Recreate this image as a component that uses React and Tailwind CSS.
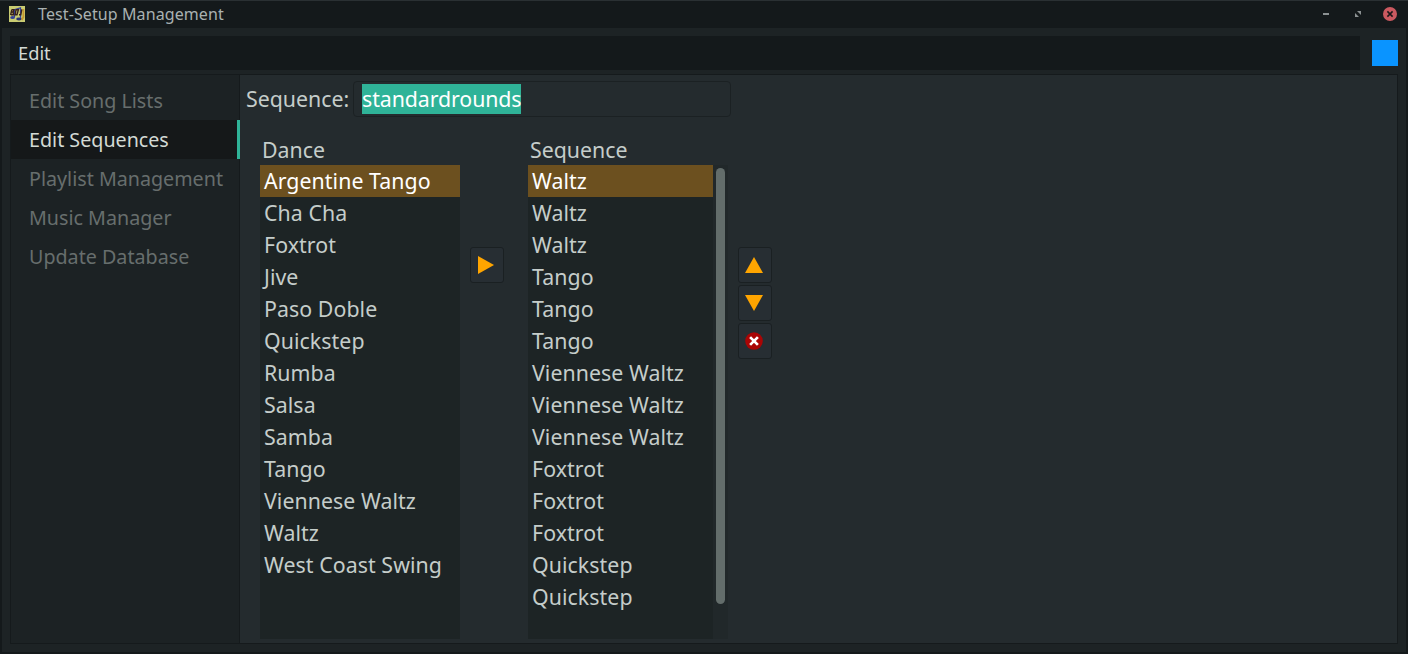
const tabs = ["Edit Song Lists", "Edit Sequences", "Playlist Management", "Music Manager", "Update Database"];

const dances = [
  "Argentine Tango", "Cha Cha", "Foxtrot", "Jive", "Paso Doble", "Quickstep", "Rumba",
  "Salsa", "Samba", "Tango", "Viennese Waltz", "Waltz", "West Coast Swing",
];

const sequence = [
  "Waltz", "Waltz", "Waltz", "Tango", "Tango", "Tango", "Viennese Waltz", "Viennese Waltz",
  "Viennese Waltz", "Foxtrot", "Foxtrot", "Foxtrot", "Quickstep", "Quickstep",
];

function AppIcon() {
  return (
    <svg width="16" height="16" viewBox="0 0 16 16">
      <rect width="16" height="16" fill="#c9cc72" />
      <path d="M5.5 11V3.6l6-1.8v10" fill="none" stroke="#35409a" strokeWidth="1.2" />
      <ellipse cx="3.6" cy="11.6" rx="2.4" ry="1.5" fill="#35409a" />
      <ellipse cx="10" cy="13" rx="2.8" ry="1.4" fill="#2b3478" />
      <path d="M14.4 3v8l-1.6 3" fill="none" stroke="#c8962c" strokeWidth="1.8" />
      <path d="M2.8 3.6 1.6 9M2.8 3.6h2L4.2 6H2.4M4.2 6l.2 2.8H1.8M7 3.6 6.2 8.8h1.8L9.4 3.8H7M12.8 3.4 11.8 8.8H10" fill="none" stroke="#39201c" strokeWidth="1.4" />
    </svg>
  );
}

function TitleBar() {
  return (
    <header className="flex h-7 shrink-0 items-center border-t border-[#2a3033] bg-[#14191b] pb-px pl-[9px] pr-[11px]">
      <AppIcon />
      <span className="ml-[13px] text-[16px] leading-6 tracking-[0.1px] text-[#a9b1b1]">Test-Setup Management</span>
      <div className="ml-auto flex items-center">
        <svg width="6" height="14" viewBox="0 0 6 14" shapeRendering="crispEdges">
          <rect y="6" width="6" height="2" fill="#8b9192" />
        </svg>
        <svg className="ml-[26px]" width="6" height="6" viewBox="0 0 6 6">
          <path d="M2 0h4v4zM0 2v4h4z" fill="#8b9192" />
        </svg>
        <svg className="ml-[22px]" width="14" height="14" viewBox="0 0 14 14">
          <circle cx="7" cy="7" r="7" fill="#cb5960" />
          <path d="m4.4 4.4 5.2 5.2m0-5.2L4.4 9.6" stroke="#1a1719" strokeWidth="1.5" />
        </svg>
      </div>
    </header>
  );
}

function Sidebar() {
  return (
    <nav className="w-[229px] shrink-0 border-r border-[#151a1c] bg-[#1c2224] pt-1.5">
      {tabs.map((tab, i) => (
        <div
          key={tab}
          className={
            i === 1
              ? "-mr-px flex h-[39px] items-center border-r-[3px] border-[#2fb398] bg-[#151819] pl-[18px] text-[#d3dad5]"
              : "flex h-[39px] items-center pl-[18px] text-[#676e6d]"
          }
        >
          <span className="whitespace-nowrap text-[19.7px] leading-7">{tab}</span>
        </div>
      ))}
    </nav>
  );
}

function List({ title, items, width }) {
  return (
    <div className="flex flex-col">
      <div className="h-[30px] whitespace-nowrap pl-0.5 text-[21.33px] leading-[29px] text-[#c5cdca]">{title}</div>
      <div className={`h-[474px] bg-[#1d2425] ${width}`}>
        {items.map((item, i) => (
          <div
            key={i}
            className={
              i === 0
                ? "h-8 whitespace-nowrap bg-[#6c501f] pl-1 text-[21.33px] leading-[31px] tracking-[0.06px] text-white"
                : "h-8 whitespace-nowrap pl-1 text-[21.33px] leading-[31px] tracking-[0.06px] text-[#c5cdca]"
            }
          >
            {item}
          </div>
        ))}
      </div>
    </div>
  );
}

function IconButton({ children }) {
  return (
    <button className="flex h-9 w-[34px] items-center justify-center rounded-[3px] border border-[#1a2022] bg-[#272e33] pr-0.5">
      {children}
    </button>
  );
}

function Editor() {
  return (
    <main className="flex min-w-0 flex-1 flex-col bg-[#242b2e] pt-1.5">
      <div className="flex h-9 items-center pl-1.5">
        <label className="h-[30px] w-[107px] whitespace-nowrap text-[21.33px] leading-[29px] text-[#c5cdca]">Sequence:</label>
        <div className="flex h-9 w-[378px] items-center rounded-[4px] border border-[#1b2123] pl-2">
          <span className="h-[30px] w-[159px] whitespace-nowrap bg-[#2fb398] text-[21.33px] leading-[29px] tracking-[-0.08px] text-white">standardrounds</span>
        </div>
      </div>
      <div className="mt-[18px] flex pl-5">
        <List title="Dance" items={dances} width="w-[200px]" />
        <div className="ml-2.5 mr-6 pt-28">
          <IconButton>
            <svg width="18" height="20" viewBox="0 0 18 20"><path d="M1 1v18l16-9z" fill="#ffa500" /></svg>
          </IconButton>
        </div>
        <List title="Sequence" items={sequence} width="w-[185px]" />
        <div className="mt-[30px] h-[474px] w-[15px] bg-[#21282a] pl-[3px] pt-[3px]">
          <div className="h-[436px] w-[9px] rounded-full bg-[#636d6b]" />
        </div>
        <div className="ml-2.5 flex flex-col gap-0.5 pt-28">
          <IconButton>
            <svg width="20" height="18" viewBox="0 0 20 18"><path d="M1 17h18L10 1z" fill="#ffa500" /></svg>
          </IconButton>
          <IconButton>
            <svg width="20" height="18" viewBox="0 0 20 18"><path d="M1 1h18l-9 16z" fill="#ffa500" /></svg>
          </IconButton>
          <IconButton>
            <svg width="18" height="18" viewBox="0 0 18 18">
              <circle cx="9" cy="9" r="8.8" fill="#aa0505" />
              <path d="m5.1 5.1 7.8 7.8m0-7.8-7.8 7.8" stroke="#fff" strokeWidth="2.7" />
            </svg>
          </IconButton>
        </div>
      </div>
    </main>
  );
}

export default function App() {
  return (
    <div className="flex h-[654px] w-[1408px] flex-col overflow-hidden bg-[#14191b] font-['Noto_Sans',sans-serif]">
      <TitleBar />
      <div className="mx-0.5 mb-0.5 flex flex-1 flex-col bg-[#1d2325] px-2 pb-2 pt-2">
        <div className="flex h-[34px] shrink-0 items-center">
          <div className="flex h-[34px] w-[1350px] items-center bg-[#14191b] pl-2 text-[18.3px] leading-7 text-[#d3dad5]">Edit</div>
          <div className="ml-3 h-[26px] w-[26px] bg-[#0a94ff]" />
        </div>
        <div className="mt-1 flex h-[570px] border border-[#151a1c]">
          <Sidebar />
          <Editor />
        </div>
      </div>
    </div>
  );
}
